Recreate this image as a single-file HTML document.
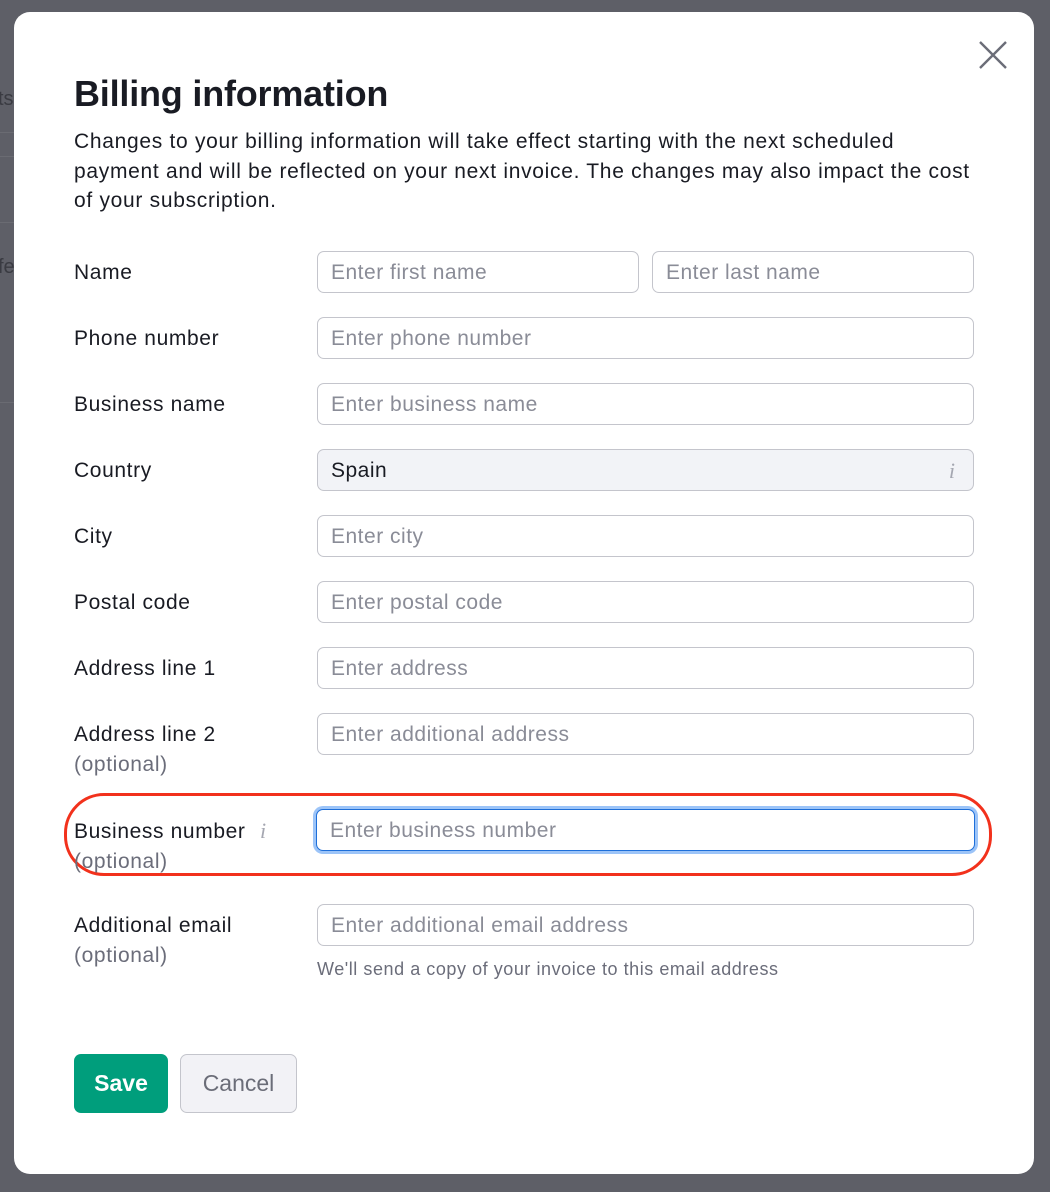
<!DOCTYPE html>
<html><head><meta charset="utf-8"><style>
*{box-sizing:border-box;margin:0;padding:0}
body{width:1050px;height:1192px;background:#5e5f67;font-family:"Liberation Sans",sans-serif;position:relative;overflow:hidden;color:#191b23}
.bgl{position:absolute;left:0;width:14px;height:1px;background:#6a6b72}
.modal{position:absolute;left:14px;top:12px;width:1020px;height:1162px;background:#fff;border-radius:16px}
.abs{position:absolute}
h1{position:absolute;left:74px;top:73px;font-size:36px;font-weight:bold;letter-spacing:-0.2px;white-space:nowrap}
.desc{position:absolute;left:74px;top:127px;font-size:21px;line-height:29.5px;letter-spacing:0.7px;white-space:nowrap}
.lbl{position:absolute;left:74px;font-size:21px;line-height:30px;letter-spacing:0.62px;white-space:nowrap}
.opt{color:#6b6d7a}
.in{position:absolute;height:42px;border:1px solid #c4c5cc;border-radius:7px;padding-left:13px;font-size:21px;line-height:42px;color:#8a8c97;white-space:nowrap;letter-spacing:0.5px;background:#fff}
.ii{font-family:"Liberation Serif",serif;font-style:italic;color:#a5a7b1;font-size:22px;letter-spacing:0}
</style></head><body>
<div class="bgl" style="top:132px"></div><div class="bgl" style="top:156px"></div><div class="bgl" style="top:222px"></div><div class="bgl" style="top:402px"></div>
<div class="abs" style="left:-2px;top:88px;color:#3a3b42;font-size:20px">ts</div>
<div class="abs" style="left:-2px;top:256px;color:#3a3b42;font-size:20px">fe</div>
<div class="modal"></div>
<svg class="abs" style="left:978px;top:40px" width="30" height="30"><path d="M2 2L28 28M28 2L2 28" stroke="#6b6d78" stroke-width="2.4" fill="none"/></svg>
<h1>Billing information</h1>
<div class="desc">Changes to your billing information will take effect starting with the next scheduled<br>payment and will be reflected on your next invoice. The changes may also impact the cost<br>of your subscription.</div>

<div class="lbl" style="top:258px">Name</div>
<div class="in" style="left:317px;top:251px;width:322px">Enter first name</div>
<div class="in" style="left:652px;top:251px;width:322px">Enter last name</div>

<div class="lbl" style="top:324px">Phone number</div>
<div class="in" style="left:317px;top:317px;width:657px">Enter phone number</div>

<div class="lbl" style="top:390px">Business name</div>
<div class="in" style="left:317px;top:383px;width:657px">Enter business name</div>

<div class="lbl" style="top:456px">Country</div>
<div class="in" style="left:317px;top:449px;width:657px;background:#f2f3f7;color:#191b23">Spain<span class="ii abs" style="right:18px;top:0">i</span></div>

<div class="lbl" style="top:522px">City</div>
<div class="in" style="left:317px;top:515px;width:657px">Enter city</div>

<div class="lbl" style="top:588px">Postal code</div>
<div class="in" style="left:317px;top:581px;width:657px">Enter postal code</div>

<div class="lbl" style="top:654px">Address line 1</div>
<div class="in" style="left:317px;top:647px;width:657px">Enter address</div>

<div class="lbl" style="top:720px">Address line 2<br><span class="opt">(optional)</span></div>
<div class="in" style="left:317px;top:713px;width:657px">Enter additional address</div>

<div class="abs" style="left:64px;top:793px;width:928px;height:83px;border:3px solid #f2311c;border-radius:40px"></div>
<div class="lbl" style="top:816px">Business number <span class="ii" style="margin-left:8px">i</span><br><span class="opt">(optional)</span></div>
<div class="in" style="left:316px;top:809px;width:659px;border:1.5px solid #1e6fd9;box-shadow:0 0 0 3px #9cc4f8">Enter business number</div>

<div class="lbl" style="top:911px">Additional email<br><span class="opt">(optional)</span></div>
<div class="in" style="left:317px;top:904px;width:657px">Enter additional email address</div>
<div class="abs" style="left:317px;top:959px;font-size:18px;color:#6b6d7a;letter-spacing:0.55px;white-space:nowrap">We'll send a copy of your invoice to this email address</div>

<div class="abs" style="left:74px;top:1054px;width:94px;height:59px;background:#009e7c;border-radius:7px;color:#fff;font-weight:bold;font-size:23px;line-height:59px;text-align:center">Save</div>
<div class="abs" style="left:180px;top:1054px;width:117px;height:59px;background:#f2f2f6;border:1px solid #c4c5cc;border-radius:7px;color:#6b6d78;font-size:23px;line-height:57px;text-align:center">Cancel</div>
</body></html>
